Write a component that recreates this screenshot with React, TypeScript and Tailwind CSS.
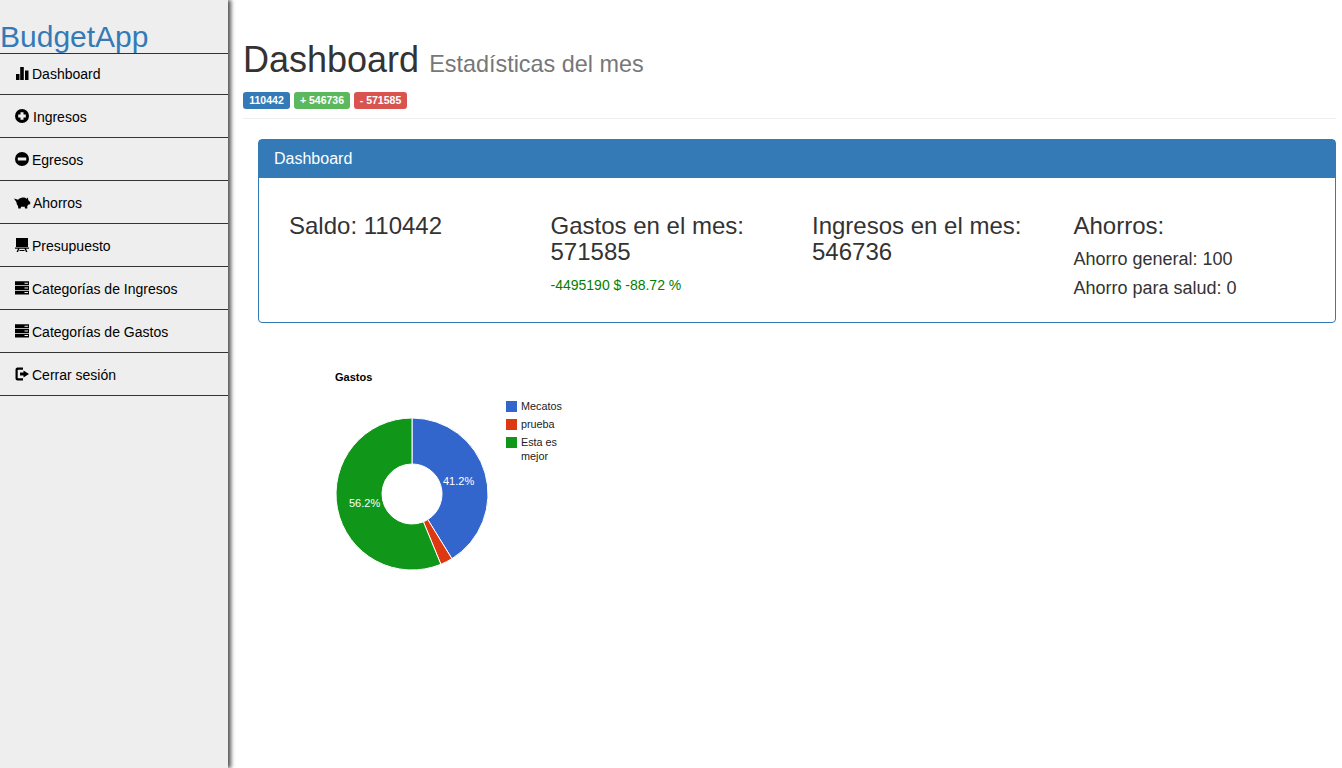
import type { ReactNode } from "react";

/** Glyphicon look-alikes, all drawn on a 14x14 box */
const icons: Record<string, ReactNode> = {
  stats: <path d="M1 8h3.500v6H1zM5.200 1h3.600v13H5.200zM10 4.500h3.500V14H10z" />,
  plus: (
    <path
      fillRule="evenodd"
      d="M7 0a7 7 0 1 1 0 14A7 7 0 0 1 7 0zM5.500 3.200v2.300H3.200v3h2.300v2.300h3V8.500h2.300v-3H8.500V3.200z"
    />
  ),
  minus: (
    <path
      fillRule="evenodd"
      d="M7 0a7 7 0 1 1 0 14A7 7 0 0 1 7 0zM2.800 5.400v3.200h8.400V5.400z"
    />
  ),
  piggy: (
    <path d="M-1 3.500 1.500 4.200 3 4.800C3.700 3.800 5 3 7 2.700c2-.3 3.500.2 4.500 1L13 2.600l.2 2.400 1.300 1.500.7.200v2.500l-1.700.4-1.200 1.400V13.500H10l-.3-1.800H6l-.3 1.800H3.300L3 10.800C2 10 1.500 8.800 1.500 7.200z" />
  ),
  blackboard: (
    <path d="M1 0h12v9H1zM0 9.600h14v1.200H0zM3 10.800h1.500L3 14H1.500zM9.500 10.800H11l1.500 3.200H11zM4.500 12h5v1h-5z" />
  ),
  tasks: (
    <path
      fillRule="evenodd"
      d="M0 .3h14v3.900H0zM9.500 1.700v1H13v-1zM0 5h14v3.900H0zM9.500 6.400v1H13v-1zM0 9.700h14v3.900H0zM9.500 11.100v1H13v-1z"
    />
  ),
  logout: (
    <path d="M.5 2.500A2 2 0 0 1 2.500.5H8v2.200H3.300a.6.600 0 0 0-.6.600v7.400a.6.600 0 0 0 .6.600H8v2.200H2.500a2 2 0 0 1-2-2zM8.500 3.500 14 7l-5.500 3.500V8.400H5V5.600h3.500z" />
  ),
};

const menu = [
  { icon: "stats", label: "Dashboard", gap: "gap-[3px]", row: "h-[41px] pt-[12px]" },
  { icon: "plus", label: "Ingresos", gap: "gap-[4px]", row: "h-[43px] pt-[14px]" },
  { icon: "minus", label: "Egresos", gap: "gap-[3px]", row: "h-[43px] pt-[14px]" },
  { icon: "piggy", label: "Ahorros", gap: "gap-[4px]", row: "h-[43px] pt-[14px]" },
  { icon: "blackboard", label: "Presupuesto", gap: "gap-[3px]", row: "h-[43px] pt-[14px]" },
  { icon: "tasks", label: "Categorías de Ingresos", gap: "gap-[3px]", row: "h-[43px] pt-[14px]" },
  { icon: "tasks", label: "Categorías de Gastos", gap: "gap-[3px]", row: "h-[43px] pt-[14px]" },
  { icon: "logout", label: "Cerrar sesión", gap: "gap-[3px]", row: "h-[43px] pt-[14px]" },
];

function Sidebar() {
  return (
    <aside className="w-[228px] shrink-0 bg-[#eeeeee] shadow-[3px_0_4px_#555555] z-10">
      <div className="h-[53px] pt-[20px] text-[30px] leading-[33px] text-[#337ab7]">BudgetApp</div>
      <ul className="border-t border-[#333333]">
        {menu.map((item) => (
          <li
            key={item.label}
            className={`flex items-start pl-[15px] border-b border-[#333333] text-[14px] leading-[16px] text-black ${item.gap} ${item.row}`}
          >
            <svg viewBox="0 0 14 14" className="w-[14px] h-[14px] shrink-0 overflow-visible" fill="currentColor">
              {icons[item.icon]}
            </svg>
            <span>{item.label}</span>
          </li>
        ))}
      </ul>
    </aside>
  );
}

function polar(r: number, pct: number) {
  const a = (pct / 100) * Math.PI * 2;
  return `${(412 + r * Math.sin(a)).toFixed(2)} ${(494 - r * Math.cos(a)).toFixed(2)}`;
}

function slice(from: number, to: number) {
  const large = to - from > 50 ? 1 : 0;
  return `M${polar(76, from)}A76 76 0 ${large} 1 ${polar(76, to)}L${polar(30, to)}A30 30 0 ${large} 0 ${polar(30, from)}Z`;
}

function GastosChart() {
  const text = "font-['Liberation_Sans',Arial,sans-serif]";
  return (
    <svg viewBox="320 360 260 220" className={`w-[260px] h-[220px] ml-[77px] mt-[37px] ${text}`}>
      <text x="335" y="381" fontSize="11" fontWeight="700" fill="#000000">Gastos</text>
      <path d={slice(0, 41.2)} fill="#3366cc" stroke="#ffffff" strokeWidth="1" />
      <path d={slice(41.2, 43.8)} fill="#dc3912" stroke="#ffffff" strokeWidth="1" />
      <path d={slice(43.8, 100)} fill="#109618" stroke="#ffffff" strokeWidth="1" />
      <text x="443" y="485" fontSize="11" fill="#ffffff">41.2%</text>
      <text x="349" y="507" fontSize="11" fill="#ffffff">56.2%</text>
      <rect x="506" y="401" width="11" height="11" fill="#3366cc" />
      <rect x="506" y="419" width="11" height="11" fill="#dc3912" />
      <rect x="506" y="437" width="11" height="11" fill="#109618" />
      <g fontSize="10.800" fill="#222222">
        <text x="521" y="410">Mecatos</text>
        <text x="521" y="428">prueba</text>
        <text x="521" y="446">Esta es</text>
        <text x="521" y="460">mejor</text>
      </g>
    </svg>
  );
}

export default function App() {
  return (
    <div className="flex min-h-screen h-[768px] overflow-hidden bg-white font-['Liberation_Sans',Arial,sans-serif] text-[#333333]">
      <Sidebar />
      <main className="flex-1 min-w-0 pl-[15px] pr-[6px]">
        <header className="mt-[40px] h-[79px] border-b border-[#eeeeee]">
          <h1 className="text-[36px] leading-[40px] font-normal">
            Dashboard <small className="text-[23.4px] text-[#777777]">Estadísticas del mes</small>
          </h1>
          <div className="flex gap-[4px] mt-[8px] text-[10.5px] leading-[11px] font-bold text-white">
            <span className="w-[47px] text-center rounded-[3px] bg-[#337ab7] pt-[3px] h-[17px]">110442</span>
            <span className="w-[56px] text-center rounded-[3px] bg-[#5cb85c] pt-[3px] h-[17px]">+ 546736</span>
            <span className="w-[53px] text-center rounded-[3px] bg-[#d9534f] pt-[3px] h-[17px]">- 571585</span>
          </div>
        </header>
        <section className="ml-[15px] mt-[20px] h-[184px] rounded-[4px] border border-[#337ab7]">
          <div className="h-[38px] bg-[#337ab7] px-[15px] pt-[10px] text-[16px] leading-[18px] text-white">Dashboard</div>
          <div className="grid grid-cols-4 px-[15px] pt-[35px] text-[24px] leading-[26.4px]">
            <div className="px-[15px]">
              <h3 className="font-normal">Saldo: 110442</h3>
            </div>
            <div className="px-[15px]">
              <h3 className="font-normal">Gastos en el mes: 571585</h3>
              <p className="mt-[9px] text-[14px] leading-[20px] text-[#008000]">-4495190 $ -88.72 %</p>
            </div>
            <div className="px-[15px]">
              <h3 className="font-normal">Ingresos en el mes: 546736</h3>
            </div>
            <div className="px-[15px]">
              <h3 className="font-normal">Ahorros:</h3>
              <p className="mt-[6px] text-[18px] leading-[29px]">Ahorro general: 100</p>
              <p className="text-[18px] leading-[29px]">Ahorro para salud: 0</p>
            </div>
          </div>
        </section>
        <GastosChart />
      </main>
    </div>
  );
}
